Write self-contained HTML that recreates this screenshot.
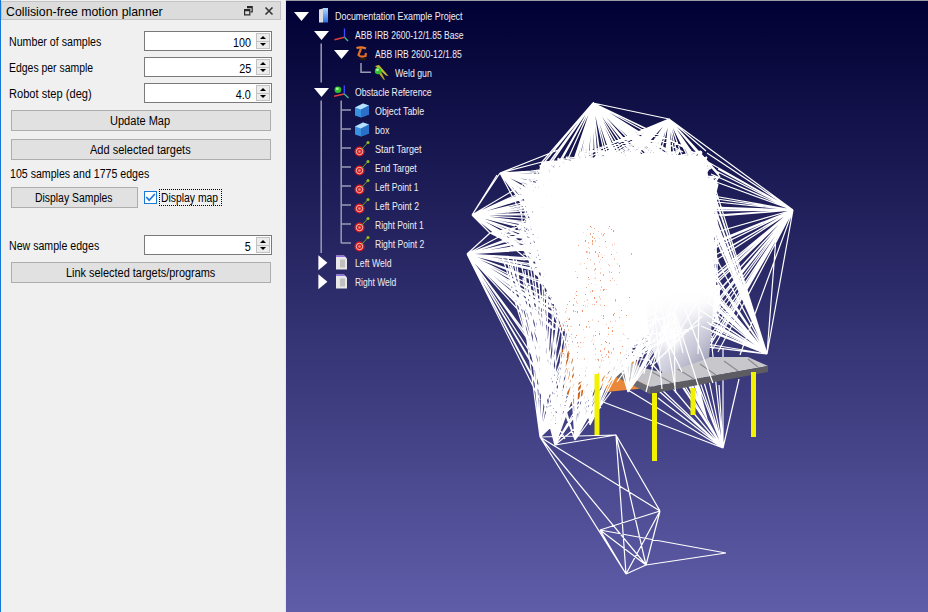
<!DOCTYPE html>
<html><head><meta charset="utf-8">
<style>
*{margin:0;padding:0;box-sizing:border-box}
html,body{width:928px;height:612px;overflow:hidden;background:#f0f0f0;font-family:"Liberation Sans",sans-serif;font-size:12px;color:#000}
#panel{position:absolute;left:0;top:0;width:286px;height:612px;background:#f0f0f0}
#bl{position:absolute;left:0;top:0;width:1px;height:612px;background:#1479d6}
#pr{position:absolute;left:285px;top:0;width:1px;height:612px;background:#e6e6e6}
#title{position:absolute;left:1px;top:1px;width:280px;height:19px;background:#dcdcdc;border:1px solid #c4c4c4}
.t{position:absolute;white-space:nowrap;line-height:12px;font-size:12px;transform-origin:0 0}
.tr{transform-origin:100% 0}
.spin{position:absolute;left:144px;width:128px;height:20px;background:#fff;border:1px solid #7a7a7a}
.sb{position:absolute;left:111px;top:1px;width:14px;height:16px;border:1px solid #c2c2c2;background:#ececec}
.sb i{position:absolute;left:0;top:7px;width:12px;height:1px;background:#c2c2c2}
.sb b{position:absolute;left:3px;width:0;height:0;border-left:3px solid transparent;border-right:3px solid transparent}
.sb b.u{top:2px;border-bottom:3px solid #000}
.sb b.d{top:9px;border-top:3px solid #000}
.btn{position:absolute;left:11px;width:260px;height:21px;background:#e1e1e1;border:1px solid #adadad}
#view{position:absolute;left:286px;top:0;width:642px;height:612px;background:linear-gradient(#000033 0px,#5f5da8 612px)}
#vtop{position:absolute;left:286px;top:0;width:642px;height:1px;background:#9a9aa6}
.tt{position:absolute;white-space:nowrap;font-size:10px;line-height:10px;color:#eeeef4;transform-origin:0 0}
</style></head><body>
<div id="panel">
  <div id="bl"></div><div id="pr"></div>
  <div id="title"></div>
  <div class="t" style="left:6px;top:5px;font-size:13px;line-height:13px;transform:scaleX(0.947)">Collision-free motion planner</div>
  <svg style="position:absolute;left:243px;top:5px" width="12" height="12" viewBox="0 0 12 12"><path d="M4 1.6h5.2v5.2h-1.6M4 2.6h5.2" fill="none" stroke="#2a2a2a" stroke-width="1.2"/><path d="M1.6 4.6h5.2v5.2h-5.2z M1.6 5.6h5.2" fill="none" stroke="#2a2a2a" stroke-width="1.2"/></svg>
  <svg style="position:absolute;left:263px;top:5px" width="12" height="12" viewBox="0 0 12 12"><path d="M2.5 2.5l7 7M9.5 2.5l-7 7" fill="none" stroke="#333" stroke-width="1.6"/></svg>

  <div class="t" style="left:9px;top:36px;transform:scaleX(0.887)">Number of samples</div>
  <div class="spin" style="top:31px"><div class="t tr" style="right:20px;top:5px;transform:scaleX(0.9)">100</div><div class="sb"><i></i><b class="u"></b><b class="d"></b></div></div>
  <div class="t" style="left:9px;top:62px;transform:scaleX(0.87)">Edges per sample</div>
  <div class="spin" style="top:57px"><div class="t tr" style="right:20px;top:5px;transform:scaleX(0.9)">25</div><div class="sb"><i></i><b class="u"></b><b class="d"></b></div></div>
  <div class="t" style="left:9px;top:88px;transform:scaleX(0.925)">Robot step (deg)</div>
  <div class="spin" style="top:83px"><div class="t tr" style="right:20px;top:5px;transform:scaleX(0.9)">4.0</div><div class="sb"><i></i><b class="u"></b><b class="d"></b></div></div>

  <div class="btn" style="top:110px"></div>
  <div class="t" style="left:110px;top:115px;transform:scaleX(0.92)">Update Map</div>
  <div class="btn" style="top:139px"></div>
  <div class="t" style="left:90px;top:144px;transform:scaleX(0.92)">Add selected targets</div>
  <div class="t" style="left:10px;top:168px;transform:scaleX(0.884)">105 samples and 1775 edges</div>
  <div class="btn" style="top:187px;width:127px"></div>
  <div class="t" style="left:35px;top:192px;transform:scaleX(0.867)">Display Samples</div>
  <div style="position:absolute;left:144px;top:191px;width:13px;height:13px;border:1px solid #1b7ad6;background:#fff"></div>
  <svg style="position:absolute;left:144px;top:191px" width="13" height="13" viewBox="0 0 13 13"><path d="M2.2 6L5.2 9.2 10.8 3" fill="none" stroke="#1b7ad6" stroke-width="1.7"/></svg>
  <div style="position:absolute;left:159px;top:189px;width:63px;height:17px;border:1px dotted #000"></div>
  <div class="t" style="left:161px;top:192px;transform:scaleX(0.865)">Display map</div>

  <div class="t" style="left:9px;top:240px;transform:scaleX(0.884)">New sample edges</div>
  <div class="spin" style="top:235px"><div class="t tr" style="right:20px;top:5px;transform:scaleX(0.9)">5</div><div class="sb"><i></i><b class="u"></b><b class="d"></b></div></div>
  <div class="btn" style="top:262px"></div>
  <div class="t" style="left:66px;top:267px;transform:scaleX(0.91)">Link selected targets/programs</div>
</div>
<div id="view"></div>
<svg id="scene" width="928" height="612" viewBox="0 0 928 612" style="position:absolute;left:0;top:0">
<defs>
<linearGradient id="boxg" x1="0" y1="0" x2="0.8" y2="1"><stop offset="0" stop-color="#ffffff"/><stop offset="0.45" stop-color="#f0f0f6"/><stop offset="0.75" stop-color="#c8c8d8"/><stop offset="1" stop-color="#9c9cb4"/></linearGradient>
<radialGradient id="hl" cx="0.5" cy="0.5" r="0.5"><stop offset="0" stop-color="#fff"/><stop offset="0.5" stop-color="#fff" stop-opacity="0.7"/><stop offset="1" stop-color="#fff" stop-opacity="0"/></radialGradient>
<linearGradient id="fadew" x1="0" y1="0" x2="0" y2="1"><stop offset="0" stop-color="#fff"/><stop offset="0.4" stop-color="#fff" stop-opacity="0.9"/><stop offset="1" stop-color="#fff" stop-opacity="0"/></linearGradient>
</defs>
<g fill="#e07828">
<path d="M572 300 L588 290 L602 335 L610 380 L596 392 L582 350 Z"/>
<path d="M598 356 L636 360 L648 388 L606 392 Z" fill="#e88838"/>
<path d="M560 350 L578 345 L590 395 L570 405 Z" fill="#c86018"/>
</g>
<path d="M586 356 L650 387 L660 372 L640 367 L605 350 Z" fill="#c4c4c8"/>
<path d="M586 356 L650 387 L650 394 L586 362 Z" fill="#6a6a72"/>

<g stroke="#fff" stroke-width="1.2" fill="none">
<polygon points="565,162 640,154 700,156 707,162 708,178 714,182 714,300 690,325 630,325 605,338 590,360 578,340 565,300 552,262 545,220 548,185 556,170" fill="#fff" stroke="none"/>
<path d="M609 213L617 284M667 250L631 244M560 266L602 352M582 310L591 191M596 207L660 210M575 164L676 202M678 205L606 160M612 173L564 210M675 215L678 305M566 202L632 254M627 291L592 177M564 203L653 301M702 337L626 291M574 369L593 252M594 327L652 286M685 322L586 324M675 259L687 327M660 201L667 226M644 244L580 226M695 262L676 210M610 212L617 312M709 195L712 270M708 343L607 162M588 267L550 189M664 161L615 220M526 197L653 333M679 206L557 310M632 287L698 338M638 215L666 207M598 291L596 207M621 154L586 349M677 167L586 259M632 184L607 258M545 170L589 382M655 286L591 176M568 269L560 235M596 232L590 374M580 286L581 189M693 328L670 172M636 338L630 261M621 225L591 379M685 194L701 168M546 254L602 183M567 197L655 304M660 213L602 173M572 291L684 211M592 262L665 154M585 204L541 284M594 327L620 245M602 352L719 320M624 258L579 274M535 232L708 180M555 227L531 209M650 317L601 284M591 312L526 187M693 336L717 203M632 221L672 212M570 240L593 329M618 192L621 150M648 225L707 232M715 192L558 159M558 308L694 159M535 232L644 305M717 298L593 389M631 263L591 373M702 220L614 151M666 253L706 311M583 273L650 225M693 196L576 293M687 327L679 245M706 245L698 316M719 323L646 303M697 160L588 305M706 311L600 186M641 237L530 204M558 158L557 272M544 197L541 281M530 215L683 335M672 312L523 195M683 273L710 249M719 323L677 207M583 153L610 231M627 181L567 287M555 175L586 349M716 230L579 278M534 231L650 305M659 156L659 232M592 175L683 269M685 302L521 189M696 301L634 252M664 231L593 252M621 154L580 273M556 282L672 267M641 196L610 311M612 251L545 198M549 267L674 213M657 239L621 225M620 221L538 183M588 167L606 353M548 186L531 246M549 305L633 197M675 231L576 253M707 199L636 162M678 299L565 312M664 206L586 259M564 262L714 312M593 252L557 220M540 166L623 280M547 291L572 319M560 260L613 227M677 292L597 288M543 262L613 238M698 316L582 244M618 155L695 244M700 331L637 203M707 190L560 260M530 214L657 323M547 295L572 291M662 192L646 152M560 260L675 231M696 188L538 247M596 207L664 226M591 176L544 223M588 321L657 171M594 327L597 373M592 257L703 183M592 350L676 288M626 211L564 203M685 312L588 217M603 181L621 339M550 277L529 250M572 310L521 187M687 296L594 163M643 322L720 310M607 284L628 308M685 170L687 312M624 193L579 363M674 213L698 291M560 262L609 283M637 279L659 152M595 231L687 298M595 181L625 172M681 166L598 228M703 165L632 254M539 284L647 156M679 191L605 259M635 253L663 304M621 225L574 246M652 163L615 296M618 313L627 290M591 226L593 376M624 187L601 348M658 206L593 176M598 314L595 181M662 267L617 323M575 164L620 226M677 178L645 264M675 215L582 266M705 270L679 190M641 237L621 256M532 224L606 353M668 300L599 245M685 170L618 313M624 252L658 258M659 152L679 184M690 342L644 217M542 169L567 215M534 239L659 152M598 351L602 227M640 268L641 305M610 342L667 167M585 164L690 297M714 285L572 239M713 291L662 267M691 235L658 240M712 300L573 276M573 311L660 213M541 260L575 190M701 228L654 289M631 270L672 295M614 333L690 263M708 180L704 255M586 160L638 340M705 170L630 233M592 350L546 292M600 246L704 255M594 205L702 220M618 342L685 193M573 301L641 196M556 317L664 214M678 334L601 348M587 390L635 227M584 326L562 225M676 306L634 252M594 236L590 301M549 162L709 290M646 264L677 178M660 261L662 230M583 383L528 180M526 219L611 329M613 226L635 253M523 192L556 282M643 251L672 288M606 160L689 197M656 197L575 164M645 243L583 195M681 240L641 303M561 305L602 233M588 217L573 187M599 263L550 189M598 228L548 282M686 250L698 316M554 277L593 329M714 278L611 322M560 252L623 237M609 283L528 180M626 348L647 153M657 292L702 220M625 294L646 163M561 166L650 290M659 156L628 248M542 255L623 217M710 275L677 207M679 191L627 181M701 156L709 272M719 305L659 288M605 254L623 316M644 197L659 232M669 275L521 236M583 184L716 317M615 166L709 275M676 231L633 337M657 296L635 212M602 183L630 214M658 286L567 287M667 250L707 157M707 281L643 295M591 258L705 170M591 390L596 349M707 281L600 246M667 200L688 325M647 330L689 265M671 338L587 326M534 219L700 319M523 195L716 262M665 162L661 190M636 322L662 281M581 160L567 192M662 193L650 225M650 317L551 211M717 278L578 344M645 248L668 262M582 162L583 384M574 369L644 260M693 336L639 153M606 353L590 201M715 184L556 213M658 203L534 273M608 227L662 171M702 258L578 301M645 266L572 291M623 190L695 332M558 308L710 249M676 210L672 250M630 251L687 320M575 333L664 324M623 207L594 205M622 213L696 244M687 296L570 172M581 160L717 298M598 321L569 333M719 231L588 236M531 177L558 262M694 157L650 164M618 313L679 284M694 185L655 286M623 190L582 343M669 283L553 262M622 166L611 322M605 259L641 303M703 319L675 215M653 335L601 218M544 273L600 150M576 211L579 260M625 267L719 177M599 165L619 340M578 344L705 170M591 219L713 313M704 223L658 342M718 294L578 301M595 311L660 263M630 172L575 352M609 217L672 212M689 265L664 228M599 257L718 264M560 262L542 236M625 267L650 207M679 184L668 210M714 285L591 299M643 244L639 293M526 219L596 297M640 235L591 379M701 156L692 297M627 290L566 247M661 190L625 267M563 211L644 216M595 293L655 191M639 159L556 188M576 324L710 168M658 203L662 301M542 257L716 245M579 278L596 297M633 180L594 205M613 226L564 271M562 203L559 247M604 243L655 304M702 220L533 259M698 182L643 244M643 301L571 159M616 334L600 286M624 179L575 344M690 303L657 274M647 239L668 210M613 156L586 266M677 272L663 327M560 266L581 331M627 295L662 230M702 263L586 259M715 192L717 220M698 225L661 196M614 151L580 216M564 210L626 211M606 344L552 173M582 212L573 276M597 209L555 261M669 304L706 185M668 300L612 154M555 208L656 253M707 339L718 260M614 203L617 284M653 183L549 267M586 160L662 281M615 166L555 261M570 240L577 154M709 291L664 214M576 324L679 190M659 288L531 177M709 275L637 286M621 154L653 186M672 249L693 343M540 193L592 333M585 254L590 201M615 296L583 266M621 154L567 192M688 289L643 301M634 204L590 374M666 328L641 161M690 263L538 231M554 198L558 262M632 184L586 266M717 181L683 300M597 209L582 301M652 286L526 196M660 192L556 290M707 157L697 180M603 166L652 301M628 166L578 262M533 215L715 192M553 262L686 250M655 191L522 191M585 173L647 330M595 181L533 224M680 224L580 382M606 317L540 168M587 289L692 297M715 222L563 331M671 311L625 295M611 329L574 320M662 301L658 332M654 289L640 177M630 261L693 277M561 305L714 176M658 342L614 310M654 316L634 147M714 280L565 312M688 157L710 310M638 219L618 197M695 262L711 296M559 247L553 274M652 286L558 308M587 326L614 203M664 319L662 193M641 222L665 293M686 243L717 183M597 288L610 212M658 265L584 235M592 257L679 190M551 237L673 335M658 258L614 266M594 298L592 237M581 339L646 163M625 163L664 161M594 346L541 259M549 231L697 180M690 344L608 227M637 164L691 159M597 237L627 295M643 322L614 237M628 306L657 171M597 209L533 215M536 170L586 324M554 277L600 286M562 225L583 273M707 190L601 348M575 344L628 279M558 255L687 312M611 322L717 183M585 227L603 181M578 259L591 191M585 173L685 193M718 260L656 253M649 266L664 317M575 290L682 250M628 306L688 289M634 204L530 214M698 316L663 164M548 291L685 199M613 150L682 331M623 316L565 312M694 162L619 234M557 235L581 160M604 150L541 277M596 239L604 358M592 262L622 310M530 215L669 275M660 201L668 300M637 154L575 352M618 192L560 260M569 349L666 253M709 291L582 286M646 152L582 212M594 298L575 190M556 201L582 286M572 319L605 321M614 205L715 184M645 314L707 190M596 285L702 258M680 216L640 177M632 209L685 243M534 231L641 208M658 153L552 173M694 159L697 270M608 227L662 206M604 304L690 342M667 226L560 322M557 308L626 252M520 202L621 329M658 265L560 235M638 215L593 329M685 306L621 225M535 224L607 162M546 226L653 183M610 311L565 314M605 341L610 162M522 191L588 340M591 223L681 306M635 212L641 303M545 247L628 276M653 333L585 173M672 288L616 334M593 389L598 325M582 212L646 163M646 303L678 246M643 295L580 216M539 262L658 203M592 314L700 227M616 341L644 272M580 255L694 187M532 255L596 382M687 244L575 290M586 313L714 312M594 346L541 188M591 195L687 157M526 196L588 305M646 280L561 251M711 310L675 216M614 333L567 221M718 184L682 331M524 235L679 185M596 317L557 266M547 291L638 340M718 260L679 185M562 269L695 244M557 272L540 165M598 368L663 266M540 166L625 294M602 233L710 342M589 322L714 278M586 266L618 197M569 158L586 328M616 341L687 290M717 241L583 316M616 177L557 235M667 250L614 331M694 159L652 232M552 240L689 197M566 333L604 261M611 329L577 154M631 244L631 272M631 244L667 250M657 171L538 247M575 263L699 196M650 317L608 216M528 244L592 251M691 307L580 358M600 193L681 162M718 197L594 384M610 342L715 192M576 324L614 174M702 337L526 196M568 249L631 272M666 238L541 260M519 224L620 221M600 186L565 293M689 245L659 298M567 197L652 301M585 204L622 342M553 274L585 173M555 166L569 333M612 199L707 190M579 372L685 170M690 263L703 234M701 151L623 271M590 201L658 342M685 273L692 198M690 310L573 198M540 228L527 179M575 164L575 190M671 311L648 209M631 270L583 153M672 331L557 310M546 226L646 280M628 308L643 269M639 215L574 183M688 157L709 195M663 327L619 340M582 301L690 342M681 166L710 168M678 334L598 312M594 327L640 321M660 263L583 344M595 181L630 264M574 320L630 172M525 226L583 273M615 205L645 314M590 201L643 244M562 225L691 249M709 219L562 239M602 351L625 267M585 173L594 346M572 238L563 211M673 297L580 329M579 341L660 263M614 174L555 204M638 275L522 191M620 251L570 297M655 206L571 255M666 328L692 293M670 209L561 171M653 186L718 225M609 152L524 249M645 169L584 340M599 183L665 299M709 290L706 199M544 273L579 274M698 167L662 193M564 262L612 251M619 340L592 262M714 280L623 207M682 224L718 247M609 217L600 180M686 230L669 304M714 318L578 373M583 195L570 297M610 300L706 245M625 275L632 190M695 238L690 173M603 212L598 368M565 230L587 326M596 362L569 317M709 254L680 162M638 215L574 365M607 258L541 277M675 231L692 303M590 185L590 301M647 330L696 332M640 321L592 269M567 221L606 359M671 338L558 262M596 285L547 295M661 292L560 212M593 389L526 196M716 262L632 285M641 305L708 297M637 298L664 209M589 198L607 161M685 302L621 154M603 356L647 153M637 295L689 266M625 246L701 156M652 289L535 224M654 262L593 389M644 305L632 190M691 249L636 338M653 209L719 305M593 292L593 219M652 301L535 224M565 241L679 191M561 305L593 189M657 163L662 230M718 184L549 267M579 193L619 234M535 183L662 267M648 209L584 391M694 187L545 286M600 149L541 281M588 281L580 329M572 239L582 301M705 170L678 246M640 321L594 298M540 228L541 188M606 281L711 310M627 295L557 269M540 228L646 174M572 330L683 217M593 176L657 292M615 166L573 301M708 302L680 171M604 304L596 382M624 258L583 195M553 179L716 302M709 290L638 221M586 266L621 154M584 340L678 299M542 169L588 395M625 267L681 166M581 248L690 297M702 220L652 289M592 333L661 341M654 262L702 319M713 291L605 341M696 297L650 207M672 281L681 162M572 319L623 214M637 295L555 166M544 197L536 170M609 337L602 233M566 202L526 196M565 241L626 291M631 272L697 339M666 207L533 215M657 239L641 161M596 239L553 262M543 262L557 304M638 329L714 280M540 228L619 322M610 150L714 318M694 226L687 298M672 288L626 348M705 170L573 301M690 173L669 304M531 209L643 322M685 193L590 293M549 231L662 210M530 214L710 168M661 190L524 185M643 251L603 356M578 276L682 250M594 236L612 288M657 262L582 212M709 254L664 191M710 304L584 348M615 220L628 248M546 292L719 263M698 291L669 243M714 312L668 342M701 156L558 159M596 207L574 365M588 274L647 239M650 164L691 159M668 294L620 215M644 272L544 223M647 153L679 184M677 207L649 266M688 157L580 255M677 178L559 204M641 208L575 352M718 184L609 321M665 162L629 206M631 235L682 250M685 322L687 244M602 351L580 273M597 209L613 238M568 249L667 167M542 257L596 207M578 259L640 333M575 374L595 345M587 343L705 265M554 198L638 329M590 301L604 268M700 286L710 342M534 204L698 316M710 178L648 308M619 248L675 259M580 226L553 237M693 206L556 213M633 212L680 177M575 374L553 185M635 302L643 269M595 345L556 256M547 291L576 211M615 220L661 230M629 206L713 313M588 398L600 193M620 215L710 330M636 322L555 204M644 216L561 251M590 185L628 279M545 247L652 232M707 157L646 174M678 213L573 288M606 281L587 159M553 185L564 220M609 152L592 262M557 310L557 189M674 165L608 227M567 239L613 192M669 271L676 210M658 153L629 278M649 161L656 185M555 164L606 361M591 239L580 205M553 213L602 351M580 286L639 159M656 279L624 161M589 322L613 150M578 301L623 232M555 175L574 365M621 256L536 189M521 236L556 256M714 312L555 227M659 156L642 287M635 227L534 273M523 254L644 272M657 296L692 198M604 173L662 281M589 188L645 243M563 330L659 232M664 206L692 198M611 322L687 327M564 267L638 275M663 266L630 261M673 201L601 218M657 171L573 311M553 185L716 302M558 262L711 222M680 162L581 316M656 197L635 212M603 241L701 228M593 219L543 181M635 186L619 340M592 175L582 301M659 232L557 310M666 330L599 183M624 258L709 291M652 289L698 291M612 190L566 223M646 152L684 303M705 270L664 231M711 222L664 214M668 342L620 312M632 302L672 334M531 209L659 298M602 173L567 239M619 234L641 222M646 163L591 373M682 224L526 196M700 210L587 219M689 265L660 213M637 308L601 218M538 231L675 216M696 244L714 280M696 301L581 339M702 318L690 263M626 252L600 180M566 202L525 245M583 344L611 193M675 152L581 189M606 354L668 262M667 212L572 189M641 203L586 313M541 277L622 160M635 302L595 231M607 161L615 205M703 198L685 243M640 285L582 286M618 197L688 157M589 332L560 235M573 187L647 300M612 345L539 176M672 281L694 226M591 390L623 214M646 282L641 161M531 223L559 204M614 310L544 180M598 318L621 178M710 304L567 327M641 208L564 294M594 163L555 175M540 168L639 153M603 181L544 223M553 206L625 267M614 203L690 310M679 184L618 192M660 253L600 286M613 226L569 349M555 166L632 287M650 201L599 312M520 202L717 298M708 297L597 209M612 251L588 267M570 350L682 224M653 333L540 166M610 212L553 185M658 322L599 312M600 246L693 160M633 337L718 184M599 245L588 274M646 213L598 228M622 342L569 349M672 295L643 251M644 250L697 339M595 181L601 348M655 304L586 259M593 219L714 280M689 197L568 249M717 278L666 328M610 162L597 216M523 195L579 341M655 323L705 275M671 161L690 263M544 276L522 227M608 289L647 330M606 344L621 225M684 321L702 156M622 198L648 209M661 341L597 226M623 214L625 172M600 267L581 356M631 244L554 218M681 240L591 226M556 213L578 344M638 219L663 304M564 262L618 313M544 197L622 310M542 242L608 289M689 197L615 248M582 212L600 186M703 198L597 352M567 327L574 195M637 286L607 222M718 294L680 254M716 245L525 245M661 341L710 310M696 301L680 171M639 266L578 247M627 270L591 379M553 213L628 248M598 321L587 289M665 293L646 264M614 333L669 304M623 232L653 264M688 325L571 304M581 339L700 286M714 176L672 288M598 314L708 302M639 266L664 226M620 277L666 238M525 245L678 300M610 231L591 299M643 322L532 253M692 278L595 345M567 287L555 204M621 243L527 188M522 240L545 198M593 219L690 343M549 305L604 358M672 288L615 166M558 308L549 205M629 283L591 219M551 273L658 195M703 319L680 216M521 189L601 284M716 245L715 208M634 324L560 260M621 154L555 204M532 224L589 339M620 251L567 227M672 295L602 351M694 157L548 291M614 331L557 266M706 168L554 205M679 191L683 273M646 306L605 259M702 266L541 260M613 192L675 152M643 301L613 156M719 320L573 198M711 310L529 264M572 318L668 210M591 223L561 251M599 257L610 342M607 281L656 185M653 205L557 304M572 318L546 226M522 191L674 213M676 258L718 294M682 331L531 223M679 277L597 216M552 173L603 212M579 298L553 262M565 332L615 296M615 153L603 181M667 250L573 328M538 231L538 183M639 341L624 282M602 183L630 172M561 295L568 197M581 356L715 184M652 301L639 159M637 279L704 255M604 261L602 183M602 183L672 267M712 177L574 246M535 183L596 349M521 235L583 344M616 206L676 306M549 237L622 262M678 300L556 204M709 272L570 240M698 291L612 239M524 185L668 210M692 303L665 245M576 234L571 175M544 223L710 342M666 253L621 178M599 257L595 293M690 342L650 164M640 206L690 343M540 254L678 335M640 264L691 235M619 248L574 320M689 300L591 176M624 252L693 293M711 296L627 291M615 296L676 306M609 337L527 179M589 332L631 177M573 311L696 295M527 188L680 150M551 211L659 206M715 192L693 328M598 166L625 275M617 234L623 328M624 258L693 343M553 185L558 255M575 344L589 154M582 286L593 376M635 302L606 353M592 225L664 214M707 199L612 173M597 288L598 368M592 333L541 277M631 207L544 223M541 259L618 192M658 273L714 285M532 193L679 199M618 313L596 232M550 277L605 363M642 337L557 272M603 212L595 345M672 312L540 254M575 344L716 262M592 225L560 260M693 328L522 188M697 270L558 159M649 344L632 285M711 222L650 305M521 236L573 286M596 297L693 206M565 241L718 247M606 168L574 333M671 161L591 176M646 163L693 160M534 239L691 307M636 322L689 300M580 205L641 309M592 251L580 361M658 153L687 244M643 251L702 267M528 225L718 225M640 264L650 207M542 176L634 147M592 262L616 243M656 291L714 280M598 268L710 342M624 187L703 165M550 290L574 320M586 313L652 232M701 151L678 300M630 233L621 154M634 252L556 317M710 304L641 305M640 333L624 282M587 390L636 169M600 186L677 292M590 201L540 168M599 312L540 165M690 310L717 298M540 266L644 216M695 332L714 231M629 283L716 245M578 247L554 202M600 286L719 305M540 209L675 152M703 234L567 195M576 253L590 232M697 270L634 204M685 193L565 241M579 193L655 206M593 176L619 266M588 267L680 216M675 229L548 282M662 193L662 272M687 312L715 208M598 368L607 153M657 171L672 267M691 206L654 327M555 208L718 197M554 312L710 249M563 330L596 222M621 178L693 343M615 248L575 263M689 186L658 278M545 286L691 235M673 302L587 390M614 331L635 269M579 298L578 344M592 262L642 342M547 287L584 340M619 322L662 230M569 333L710 275M588 321L588 167M716 321L551 273M522 227L621 154M574 369L679 184M625 163L591 373M660 192L668 286M565 241L557 189M573 311L703 319M658 195L645 314M664 317L575 333M564 164L573 301M575 271L595 345M594 282L684 211M581 248L644 216M701 156L549 162M598 314L569 202M586 324L691 206M658 322L697 270M583 195L658 342M698 167L596 382M690 303L604 358M577 222L554 247M709 167L566 157M587 159L578 301M656 185L712 225M582 301L669 304M600 286L619 255M689 300L711 222M700 227L678 246M638 221L640 285M676 210L689 245M683 217L665 299M591 195L605 249M637 308L600 180M685 313L670 195M703 183L580 226M592 251L643 281M702 318L607 284M654 176L693 343M666 295L675 162M596 222L699 196M612 239L667 265M589 238L559 215M568 269L534 231M665 154L626 252M605 321L623 299M535 224L654 232M667 265L632 254M670 209L710 178M574 183L602 183M658 332L560 315M639 215L698 291M687 296L672 260M696 218L572 219M689 186L561 166M577 232L702 267M531 171L559 204M691 249L522 188M624 158L569 333M612 251L660 263M614 237L716 262M572 330L623 316M679 284L644 197M631 270L591 256M581 189L691 159M532 255L714 278M555 204L528 225M526 197L623 328M589 196L591 379M583 384L640 264M707 157L567 192M641 203L649 161M656 279L642 220M674 192L600 286M631 177L657 292M637 336L558 158M697 270L609 283M623 217L546 188M664 161L660 192M614 310L650 164M694 157L576 253M596 222L610 300M566 300L714 218M564 262L710 168M556 282L613 192M612 173L551 273M694 185L688 289M559 252L666 328M698 291L596 317M653 264L633 212M540 228L576 165M546 292L623 328M677 292L529 194M628 290L545 272M715 208L596 207M695 262L650 164M613 238L523 195M606 359L689 265M715 184L675 188M606 168L584 340M680 216L531 246M678 334L662 206M584 391L574 320M642 241L683 217M594 165L654 176M709 275L644 197M531 209L593 171M593 389L522 191M697 191L595 363M540 168L626 291M623 328L706 311M672 281L541 259M707 157L654 289M525 226L650 201M658 273L637 286M552 216L530 264M581 248L713 340M613 156L705 275M707 199L684 303M672 212L643 263M559 215L534 239M631 218L677 310M688 238L718 294M555 166L712 225M693 293L641 305M667 200L697 191M685 170L709 219M635 302L605 321M629 206L674 165M566 303L593 284M700 210L600 150M653 183L691 224M664 231L602 173M613 156L586 384M718 264L559 204M657 239L650 201M705 179L581 248M592 314L556 282M639 159L663 204M530 214L574 333M657 163L552 240M617 323L658 258M655 191L572 219M612 199L701 168M643 322L569 333M709 275L590 185M592 177L667 167M670 172L712 270M636 169L610 162M693 206L664 324M714 290L634 324M539 176L564 208M608 216L711 222M581 316L714 231M702 258L693 160M665 299L700 319M658 203L710 305M584 348L709 265M678 334L604 150M530 204L591 212M657 163L717 278M659 288L528 251M710 330L718 226M576 324L553 185M625 242L618 316M524 208L600 193M622 198L528 225M589 196L622 262M660 192L596 297M664 324L637 311M520 231L706 311M687 320L617 312M688 238L612 199M599 165L685 306M585 396L710 249M565 241L662 193M707 157L643 269M690 297L542 169M594 327L588 167M549 162L582 243M664 324L588 340M599 312L544 223M700 210L673 335M574 365L642 337M685 273L684 211M637 164L676 258M557 308L592 327M557 304L710 262M560 315L614 174M678 300L639 149M653 209L594 205M545 247L552 184M586 266L608 216M576 211L719 177M604 304L588 267M527 188L560 262M624 187L685 313M593 189L644 260M690 263L577 381M575 366L627 181M580 216L542 255M702 319L688 238M532 213L582 266M679 190L653 183M662 215L521 235M717 278L600 193M709 265L620 245M641 208L609 217M615 205L647 239M619 340L531 246M602 173L714 340M538 243L579 349M627 281L573 198M593 292L614 310M703 156L652 163M712 300L592 333M667 226L711 310M524 185L665 162M670 172L701 261M524 208L587 373M582 212L586 324M714 278L580 361M541 277L658 342M570 283L617 284M675 282L632 231M573 311L657 262M701 261L661 207M579 274L672 212M617 323L587 373M561 305L580 382M709 290L581 160M640 235L520 202M611 241L644 260M652 324L593 176M564 220L651 160M605 341L717 298M624 158L646 264M688 157L578 230M692 303L662 281M639 341L687 296M573 286L696 297M640 297L720 310M583 383L549 162M638 221L658 265M529 263L596 362M552 173L640 333M558 262L612 190M686 254L645 248M693 293L675 209M631 235L525 253M526 197L551 237M605 321L596 285M570 350L675 188M637 311L635 269M644 197L685 313M582 211L622 262M570 271L577 232M643 295L611 193M603 241L565 314M652 252L622 213M557 235L610 338M711 222L572 330M625 294L557 189M616 243L662 230M714 218L589 216M624 273L640 235M634 280L665 230M590 374L653 183M716 262L662 171M639 293L607 153M572 319L532 255M579 251L698 225M618 197L654 185M654 232L665 154M558 255L568 197M654 316L566 202M540 165L587 373M625 160L622 213M574 329L676 202M646 282L592 177M561 166L557 304M573 286L696 301M580 273L666 164M635 253L702 319M649 161L606 361M592 327L600 186M609 152L699 196M623 328L656 291M646 282L692 293M693 288L678 205M588 400L607 161M639 153L613 227M716 321L701 156M690 263L636 169M594 384L637 308M638 275L578 373M550 290L653 234M652 253L525 226M570 297L560 260M705 317L701 168M531 193L706 331M570 297L607 162M549 217L583 184M646 152L650 290M685 273L709 254M692 278L652 232M655 304L529 264M680 150L569 333M680 264L668 294M680 254L653 264M631 285L585 173M620 348L617 323M575 352L689 197M575 164L659 298M714 285L598 318M606 353L567 227M592 237L572 358M711 310L701 168M595 363L541 260M594 327L535 224M690 344L710 178M719 177L583 384M607 258L664 206M650 164L538 243M582 192L610 162M697 339L658 278M708 297L528 225M676 306L554 312M680 150L614 205M685 243L590 201M619 322L625 172M697 296L588 236M576 165L533 204M646 163L625 246M620 245L658 286M606 359L714 176M572 239L618 155M591 195L712 300M644 216L714 269M596 207L688 289M649 266L573 301M622 262L698 291M592 225L549 305M605 249L584 348M565 217L663 327M673 201L576 211M702 220L594 236M590 374L591 226M570 297L640 206M531 177L716 246M618 155L628 276M667 212L591 373M684 303L581 237M572 358L689 197M701 168L685 193M599 312L646 282M682 224L607 162M596 207L602 233M641 161L625 267M637 298L674 269M667 167L533 215M667 226L702 206M651 302L557 295M587 326L588 281M643 295L540 168M634 147L682 224M582 244L716 262M524 185L630 233M621 154L701 156M716 246L645 248M714 176L543 181M554 266L624 187M618 316L592 262M635 158L667 200M592 327L534 239M559 326L647 156M576 234L653 264M616 341L571 304M581 160L706 168M628 279L592 225M633 337L652 289M673 220L602 173M625 163L604 304M576 165L674 165M557 269L591 195M571 304L667 200M665 245L716 245M719 323L695 238M664 214L707 232M629 283L570 300M630 251L718 260M569 202L580 244M662 267L594 168M538 247L637 286M615 296L569 202M703 251L682 343M628 290L702 266M565 293L639 215M595 345L716 273M630 261L572 291M628 308L555 304M619 322L662 192M563 331L578 276M609 337L547 287M603 246L525 226M696 301L598 325M705 179L595 293M549 305L678 255M632 184L627 270M606 281L576 293M691 224L620 348M531 177L641 203M614 333L627 232M646 306L603 356M572 235L653 209M692 297L717 181M648 308L558 262M608 227L714 176M591 239L712 270M553 274L583 273M669 243L606 353M631 263L667 212M682 331L561 295M586 328L571 267M663 204L559 252M669 271L533 204M640 206L700 286M577 154L518 229M614 310L706 210M625 267L661 230M669 224L607 166M556 201L533 259M677 292L653 183M600 267L541 259M662 215L621 150M540 168L719 177M692 297L555 175M645 286L547 291M578 301L673 297M714 285L670 172M546 198L577 222M645 248L609 152M596 222L595 293M699 210L626 291M660 213L564 164M580 205L595 181M617 312L668 340M668 286L587 343M633 337L710 336M641 303L546 254M709 275L623 214M653 183L619 340M718 260L581 160M540 266L624 273M660 213L658 279M638 221L595 231M633 212L666 164M618 313L669 159M581 160L551 211M702 266L574 195M552 240L689 245M658 332L687 320M707 232L548 178M564 330L678 246M593 189L598 318M531 223L679 199M719 263L528 244M649 266L582 162M656 197L528 180M680 216L669 283M592 225L554 247M559 234L600 150M624 187L651 292M668 210L570 283M612 173L631 270M623 328L521 187M667 301L540 254M544 223L556 317M662 192L521 189M668 286L592 237M589 238L667 212M660 261L591 176M719 305L549 162M583 195L667 226M642 287L588 305M631 183L551 237M573 286L696 188M571 255L714 285M663 327L598 351M653 333L709 272M556 282L643 301M586 349L592 257M544 297L669 243M653 264L621 225M531 209L538 183M685 343L624 282M586 349L662 230M591 172L598 312M701 168L659 156M547 295L710 275M592 251L561 305M650 207L719 263M593 252L657 274M636 266L653 205M602 183L669 243M534 231L565 217M695 332L554 247M631 207L716 314M674 165L592 269M632 302L584 185M582 301L673 201M577 222L547 287M667 226L647 200M529 194L661 292M703 251L564 262M582 162L657 163M656 291L642 335M566 223L640 297M680 150L622 262M640 321L638 275M700 210L589 216M546 226L680 162M680 177L615 205M706 311L523 192M632 209L603 181M585 348L583 266M670 172L592 314M574 369L645 169M589 198L631 270M650 171L688 157M710 178L625 242M658 153L544 224M609 217L640 177M632 302L522 240M613 238L553 213M685 193L650 201M718 226L545 184M638 219L547 295M716 302L654 262M646 163L679 184M574 320L591 172M556 317L673 302M658 279L710 330M665 245L621 154M676 258L560 260M668 286L664 206M573 311L654 185M613 227L540 209M584 391L652 301M625 294L610 342M619 322L575 340M617 323L690 303M599 257L672 249M553 274L603 356M648 209L647 153M530 215L697 264M539 219L580 226M581 356L645 169M633 212L573 311M683 164L626 152M652 252L689 265M679 184L663 326M672 331L554 202M594 205L710 304M693 204L668 300M524 213L598 351M719 309L602 183M560 260L641 340M698 291L649 304M664 317L708 180M698 182L660 201M696 244L591 312M617 284L587 343M681 247L592 257M673 201L586 313M716 314L632 209M702 258L658 322M639 266L685 317M685 312L577 232M608 289L660 213M675 259L545 247M714 176L520 202M590 265L697 270M621 243L566 157M632 183L575 344M619 322L667 222M685 312L675 188M561 166L716 273M638 219L664 191M602 233L582 390M673 297L591 390M565 230L679 185M680 171L552 184M551 265L604 358M544 197L581 379M544 224L567 287M712 300L699 248M641 303L679 185M531 171L607 161M607 161L613 226M549 198L664 226M569 202L581 356M667 167L637 203M695 244L660 253M584 326L685 273M571 267L601 159M574 369L591 312M555 204L590 232M592 333L615 166M552 240L595 345M679 206L524 213M679 191L672 281M697 180L652 232M588 398L550 189M588 217L585 254M546 254L656 197M589 154L584 326M694 226L660 261M712 270L613 150M632 209L552 173M586 313L716 273M572 235L642 342M710 249L675 188M554 277L544 224M604 304L519 224M575 344L556 213M582 211L614 237M545 170L635 227M657 323L526 197M558 262L662 230M593 252L658 258M638 303L624 179M652 232L634 280M634 280L710 305M718 264L588 267M690 173L678 335M614 174L588 281M685 313L576 253M696 301L600 149M562 225L609 267M614 237L610 338M580 216L639 324M631 207L561 171M674 230L618 342M589 188L578 301M608 289L709 265M567 239L638 275M565 293L707 157M656 253L555 164M567 192L714 218M645 169L710 310M596 232L641 303M617 323L652 324M657 274L542 242M702 206L623 328M574 221L657 292M660 256L696 218M532 224L679 277M598 228L636 338M590 232L702 156M598 268L567 221M631 218L559 247M566 202L591 390M604 243L590 293M522 191L583 384M657 157L549 267M569 202L696 332M580 255L598 351M678 335L592 333M687 312L664 209M592 237L580 273M672 250L595 181M625 163L625 283M562 239L557 266M626 165L623 190M589 198L711 310M581 316L654 232M685 306L672 161M621 331L591 239M618 342L545 170M663 204L685 273M561 281L693 206M568 340L682 343M708 199L525 226M666 238L681 162M650 225L557 310M696 332L693 293M549 305L625 160M550 189L521 235M710 310L582 192M579 278L557 310M556 290L696 218M557 308L667 212M588 321L579 349M670 209L652 301M631 180L680 264M715 222L716 321M716 314L654 185M573 288L552 173M677 178L552 173M538 183L649 161M643 263L654 289M559 215L716 302M600 193L577 381M583 316L655 206M704 223L540 224M613 238L529 250M524 249L592 315M635 212L657 262M588 305L592 225M631 272L700 227M600 246L685 343M582 266L585 396M590 265L594 346M551 265L632 190M665 245L716 248M709 254L590 309M526 187L640 285M625 160L669 283M640 268L701 261M585 254L642 241M654 185L676 288M661 230L658 286M701 261L676 210M591 191L561 295M605 363L534 219M567 287L619 340M577 381L631 180M661 292L688 289M694 157L520 202M682 331L685 243M601 284L658 240M685 243L673 335M672 161L693 343M683 269L609 267M599 245L673 220M701 315L591 191M524 208L664 319M678 334L547 287M587 373L638 221M693 288L657 296M663 204L586 324M640 206L552 173M617 254L637 311M593 329L695 332M518 200L656 291M586 160L614 331M615 220L518 229M707 190L567 287M665 245L621 154M610 212L581 356M634 324L623 190M718 225L611 176M666 253L607 284M567 197L687 298M658 286L601 348M649 198L618 192M600 150L567 197M719 309L683 300M594 298L636 169M567 215L604 358M567 197L592 237M615 205L527 188M629 206L700 331M690 303L640 297M672 249L573 187M616 269L635 158M693 206L691 159M711 310L710 336M549 198L673 302M598 291L588 395M701 156L591 172M610 300L696 295M690 310L625 294M665 293L664 209M567 192L620 215M689 197L595 231M552 173L662 267M519 224L605 299M611 176L578 247M642 335L569 171M681 162L657 292M626 348L646 303M710 275L654 173M577 154L623 316M612 239L681 247M591 226L555 204M551 273L586 160M553 185L599 312M701 151L632 165M603 241L714 290M578 301L667 226M597 237L672 249M546 226L545 170M683 300L652 252M529 263L689 197M606 361L648 225M632 165L580 382M606 168L659 341M598 351L567 221M719 320L557 295M654 289L621 154M588 400L634 308M531 209L677 167M547 287L642 287M674 213L626 165M548 291L593 292M670 209L591 239M592 269L682 331M546 246L662 301M638 219L575 290M534 231L566 223M624 273L666 328M693 277L681 247M622 166L557 266M652 163L690 344M600 149L643 295M594 282L569 333M562 203L597 288M641 208L655 304M593 176L534 273M546 188L571 175M628 308L686 230M643 244L673 201M624 193L605 341M554 198L631 235M535 183L544 224M643 295L621 339M653 183L647 153M660 253L577 232M587 373L526 219M690 344L626 152M653 333L690 344M650 171L586 177M585 348L581 189M624 179L602 233M528 244L555 304M604 304L583 266M640 235L672 295M672 267L588 398M644 217L564 220M530 204L590 309M685 313L604 173M598 351L692 303M596 297L717 203M627 232L541 284M619 255L593 176M706 331L612 199M624 273L678 255M653 333L552 240M685 207L640 206M599 312L697 270M631 285L592 226M585 227L701 315M674 213L683 164M662 171L561 295M615 205L650 305M568 328L532 224M570 350L708 343M707 339L649 344M618 316L653 209M693 196L597 373M582 286L719 177M650 290L579 193M584 340L553 262M659 152L669 283M680 216L613 227M594 163L687 237M702 258L619 340M676 202L585 227M680 224L624 273M631 218L710 262M565 332L674 213M625 246L569 317M575 344L624 187M620 312L563 330M588 217L568 340M544 276L528 225M620 277L685 306M580 329L632 302M674 230L719 320M582 286L629 278M610 231L604 173M669 159L662 272M697 264L580 358M587 373L624 282M612 199L719 320M672 281L578 276M593 389L607 284M716 246L667 222M533 259L614 151M587 373L653 234M657 171L557 308M584 348L584 185M596 382L526 187M556 213L661 190M689 197L572 319M552 173L625 294M567 227L654 262M662 171L619 234M709 195L553 206M606 361L714 278M612 199L575 344M567 192L711 222M542 176L694 185M694 185L710 336M603 217L683 164M557 304L568 197M579 372L528 180M709 272L589 339M618 316L676 258M707 157L656 279M624 273L707 238M584 348L620 215M591 226L644 272M523 192L607 222M526 187L659 156M663 326L639 293M648 308L587 256M601 159L572 310M662 210L610 212M698 316L644 218M607 162L715 222M714 318L676 258M525 253L586 349M565 230L630 251M676 288L525 253M607 281L672 331M709 272L590 201M702 152L666 207M645 248L549 205M564 208L607 284M597 237L690 310M588 267L704 223M657 163L666 326M551 211L536 170M604 322L668 262M568 249L629 283M667 301L533 204M639 153L593 389M643 322L616 243M616 177L576 165M560 266L644 250M666 283L607 161M661 196L628 290M709 219L583 383M556 188L586 177M596 382L598 314M648 308L602 183M642 337L624 161M596 223L679 277M667 301L672 212M621 225L657 171M652 252L585 164M657 157L598 351M592 350L679 206M602 183L702 318M664 209L552 173M647 153L579 278M594 346L671 311M590 201L532 224M717 241L526 196M661 341L637 154M671 331L652 301M604 243L518 200M584 326L694 162M567 327L663 164M693 277L668 294M672 250L644 260M567 192L583 273M677 178L693 204M645 314L703 165M542 169L591 219M549 236L578 276M622 160L549 267M549 162L579 251M609 152L675 229M549 231L535 183M656 291L641 237M529 264L583 271M675 231L575 290M685 243L707 339M541 260L562 225M543 270L640 333M703 169L582 286M568 197L662 210M547 295L621 243M549 231L708 180M702 152L650 317M575 340L554 198M637 295L593 329M543 270L562 239M685 313L620 226M553 274L604 304M540 254L674 165M716 248L632 183M644 217L582 151M688 238L560 262M642 220L599 312M573 288L532 255M567 239L578 262M671 331L674 192M697 270L651 302M660 263L635 302M690 173L597 226M552 173L527 179M566 202L597 288M620 296L659 341M567 195L597 216M592 175L658 279M631 180L572 238M572 358L528 251M716 302L622 294M594 346L587 390M692 198L575 344M584 218L600 193M680 224L587 256M715 184L580 272M710 336L679 184M643 263L666 164M525 245L610 300M570 172L616 341M626 211L573 276M615 205L654 316M620 296L677 272M643 322L569 280M580 216L675 215M609 321L609 283M659 341L588 321M642 220L645 286M564 208L601 324M554 247L668 300M664 209L561 251M694 226L672 312M581 160L656 197M661 230L589 339M570 297L714 180M675 188L583 184M681 166L715 301M555 164L624 179M709 275L698 316M649 266L602 227M715 184L704 255M580 216L582 151M710 275L711 310M714 231L607 258M579 363L531 223M545 170L719 177M662 272L664 317M552 173L606 354M697 339L540 266M677 310L589 332M519 224L591 373M572 319L701 315M650 164L714 231M649 304L584 391M687 298L604 243M599 312L559 252M529 194L553 237M707 190L530 204M714 280L573 288M575 344L587 159M618 192L591 219M696 218L534 231M574 246L702 258M557 269L685 306M547 295L588 281M667 265L714 278M582 301L686 254M554 202L647 330M617 254L684 321M639 159L534 239M583 271L644 272M588 398L689 245M705 179L601 324M567 215L704 255M526 197L680 162M649 161L618 197M581 316L604 173M571 293L565 170M643 301L583 384M633 197L558 307M568 340L641 196M632 183L567 287M658 258L526 219M674 213L678 246M693 206L679 245M658 322L558 158M668 300L588 274M596 232L581 356M718 225L705 170M619 248L646 163M561 295L659 298M708 199L547 287M682 331L530 264M519 224L633 212M672 334L696 297M557 283L678 335M578 247L657 323M538 183L589 154M544 273L641 208M538 247L714 180M578 301L542 255M632 221L646 272M592 225L624 258M555 204L687 298M695 238L581 248M528 251L717 298M616 206L690 173M575 340L693 328M593 329L620 277M611 329L703 165M623 328L714 278M520 202L605 313M659 288L718 294M569 317L649 304M698 225L639 153M662 171L615 289M630 251L576 165M560 260L664 206M637 286L663 327M525 253L552 173M647 156L586 177M629 311L630 214M657 157L614 266M662 192L708 199M720 310L630 172M685 170L672 249M673 297L592 262M625 275L561 251M612 199L580 361M678 334L544 197M624 158L709 291M691 224L566 300M680 254L622 262M672 334L696 297M534 231L591 176M559 241L584 391M690 297L679 185M665 299L569 280M612 199L639 341M687 244L534 204M580 244L545 170M661 181L714 180M706 185L593 189M644 272L607 258M518 229L634 147M592 314L649 344M639 266L586 349M549 231L586 266M708 180L615 252M582 310L535 183M544 297L573 311M604 322L641 161M568 269L544 276M591 195L652 289M561 295L592 315M569 280L718 294M698 167L568 340M699 196L708 302M678 246L642 287M592 331L620 312M654 262L570 297M525 253L639 341M610 212L717 183M660 263L592 314M707 281L704 223M549 236L640 297M662 171L566 202M616 341L648 209M675 188L689 300M708 302L553 185M547 295L638 329M583 184L685 343M535 183L610 342M634 280L524 185M594 168L706 331M691 249L591 172M685 170L714 280M693 196L553 249M597 288L600 160M633 337L619 291M700 286L606 317M559 241L582 212M710 330L580 226M584 185L559 311M716 248L662 267M703 169L595 293M593 329L567 227M650 305L550 296M551 273L592 314M584 326L614 331M640 297L632 184M667 226L550 296M604 362L705 270M659 206L707 157M589 339L712 300M705 265L664 324M622 198L638 221M710 310L640 264M525 226L661 207M661 196L613 150M639 324L602 351M574 365L703 169M525 253L520 197M669 271L591 219M694 162L541 277M576 165L656 253M688 238L697 191M639 341L529 264M653 264L620 221M636 169L522 191M682 224L582 301M661 207L567 192M570 350L681 162M719 305L691 206M683 300L691 224M705 275L657 262M591 223L620 251M703 156L557 235M706 245L637 336M719 305L716 245M572 238L575 290M583 195L697 191M619 248L560 262M605 249L657 292M594 168L524 208M679 284L659 156M602 183L553 185M612 251L522 188M559 247L624 193M716 245L695 332M698 291L658 332M621 329L698 338M624 278L662 301M665 293L636 322M523 195L642 220M582 151L583 316M582 212L591 312M582 266L699 196M687 157L572 310M602 233L541 260M665 293L601 348M630 261L701 261M664 228L533 204M687 312L532 224M686 230L630 264M606 344L635 212M565 293L717 203M565 293L579 372M662 230L622 213M654 327L553 185M616 341L643 263M672 249L653 335M666 328L640 297M592 350L668 262M612 251L710 168M709 195L640 206M691 206L652 253M652 301L641 340M534 273L556 290M546 246L640 264M680 254L580 286M687 296L678 205M547 291L719 305M695 262L672 250M705 317L588 274M696 301L658 203M621 150L586 177M540 166L618 155M619 255L610 231M573 301L646 152M659 156L588 398M676 258L623 271M642 342L621 243M580 255L688 325M580 216L593 292M604 261L637 336M706 311L649 266M571 159L606 317M586 266L544 224M528 225L717 220M708 302L686 254M672 331L641 208M598 351L630 251M624 193L522 227M616 290L572 330M702 206L607 222M701 151L540 266M716 246L647 156M591 258L686 243M669 224L694 157M598 291L600 150M561 295L658 332M520 231L575 263M587 256L572 219M617 323L637 286M531 177L702 220M628 166L629 278M615 153L557 269M611 322L621 243M600 246L574 183M710 330L643 281M654 289L661 181M664 191L545 249M572 358L540 168M620 221L598 312M647 239L632 183M681 166L646 272M654 176L580 286M593 176L716 314M584 348L642 337M539 284L634 204M619 322L597 209M564 203L612 173M570 350L625 275M566 247L598 268M630 233L653 333M579 274L720 310M599 245L718 226M718 260L635 253M662 301L633 197M689 245L690 297M538 231L707 281M692 198L675 162M588 321L644 217M529 263L572 238M549 231L575 340M620 296L640 235M530 214L563 330M538 231L549 162M562 269L570 297M592 225L657 163M687 298L712 177M684 211L662 171M580 205L572 319M540 254L601 250M527 179L564 262M588 167L718 260M664 228L703 319M529 264L702 263M582 151L626 152M664 161L656 291M553 185L624 187M640 333L615 153M615 289L579 298M605 313L605 254M702 263L602 183M647 156L642 287M609 321L600 150M680 216L691 249M598 291L703 251M672 249L675 216M620 215L578 262M639 341L648 209M716 262L685 193M659 156L718 197M646 306L599 312M553 185L546 254M699 210L626 291M716 230L714 180M532 255L582 151M589 188L623 207M609 213L540 166M545 286L709 291M678 246L705 270M609 321L670 209M683 217L592 269M711 222L540 166M556 188L658 206M614 203L638 221M560 260L693 328M570 283L533 215M714 285L606 362M606 344L637 308M636 162L638 340M637 286L548 186M583 195L568 269M617 323L671 311M709 219L612 345M692 303L635 158M705 179L622 166M635 186L718 226M582 390L645 264M658 240L676 210M588 321L667 226M582 244L685 273M610 300L605 263M600 193L588 267M557 304L718 225M541 260L623 316M678 335L588 321M623 214L631 244M555 261L617 312M634 280L633 197M598 321L553 262M635 186L583 271M588 395L629 206M636 322L677 207M586 313L672 295M676 306L718 184M685 302L718 226M633 337L524 235M579 363L679 245M702 152L570 172M577 320L667 301M694 159L560 252M703 198L577 232M699 248L536 170M698 291L590 201M603 181L624 282M629 206L546 226M664 226L640 177M603 217L687 298M651 302L550 290M594 168L658 332M639 341L667 250M620 251L612 345M623 280L564 203M605 249L638 303M574 320L605 259M691 249L664 317M550 290L621 331M635 227L588 167M650 164L638 275M678 246L558 262M563 223L605 259M594 236L640 268M660 210L636 266M544 224L590 293M702 152L621 178M592 177L706 185M612 288L716 246M533 224L712 270M592 350L625 295M615 153L688 238M573 288L657 262M583 344L718 226M644 197L610 300M597 352L605 263M626 348L607 284M583 344L695 244M706 245L674 192M660 201L668 340M620 251L570 172M719 305L693 277M568 249L589 198M695 202L689 266M696 218L609 217M571 175L606 361M614 310L653 264M599 183L554 247M575 290L574 246M586 254L555 175M594 384L678 255M678 300L714 280M553 206L572 358M664 228L617 284M594 298L719 320M691 249L644 216M556 317L676 306M552 216L594 282M657 239L719 309M718 226L614 174M606 317L550 306M708 297L599 263M710 275L559 252M672 281L574 329M571 159L718 260M653 264L580 382M575 333L557 269M630 233L636 322M562 269L658 273M581 316L688 238M550 277L678 305M675 152L690 263M711 296L582 211M693 204L604 261M637 295L703 251M701 261L693 343M539 262L574 320M599 183L660 305M626 165L683 273M601 324L710 310M605 313L589 216M569 202L661 230M595 345L614 310M564 294L655 304M583 195L581 331M688 289L561 295M532 224L623 232M699 196L532 224M541 188L672 161M580 273L660 253M594 205L608 289M612 190L672 288M589 382L564 164M709 167L603 166M672 295L621 243M687 320L688 157M614 333L565 293M541 281L594 327M680 224L658 206M714 290L640 288M692 278L685 317M636 266L571 267M641 237L676 306M625 163L717 203M683 164L643 281M562 225L646 174M538 247L573 276M547 287L623 328M648 308L596 297M692 278L627 232M651 160L705 170M575 361L662 215M583 273L585 348M545 272L707 281M670 172L655 304M690 303L639 266M620 226L532 253M661 292L557 235M590 232L666 328M661 341L649 304M542 257L568 269M544 224L693 196M662 215L567 215M589 188L566 247M681 162L613 150M521 187L563 330M635 269L594 163M553 185L569 158M534 273L577 222M718 225L592 226M678 213L553 185M647 239L662 193M635 186L583 153M687 296L558 159M647 319L636 356M592 318L647 319M631 349L600 332M595 355L615 318M577 345L607 306M634 311L606 354M577 315L597 329M591 326L655 331M601 357L638 318M586 304L602 330M582 322L641 355M587 348L623 360M568 342L641 355M568 334L639 360M591 321L624 355M587 367L645 321M618 357L598 308M586 352L634 361M599 305L586 385M604 375L586 352M593 329L634 358M622 325L598 343M641 333L583 384M645 314L607 377M592 318L652 349M602 330L607 306M609 360L641 329M577 345L622 325M628 316L653 336M631 349L638 318M586 378L602 330M651 329L629 350M601 355L599 333M603 311L628 316M636 316L590 385M625 367L601 367M606 347L607 377M586 385L572 316M646 338L576 308M617 310L591 349M601 355L594 329M583 384L587 337M587 337L636 316M575 321L653 336M582 307L598 342M599 333L638 315M639 321L652 349M583 386L643 347M605 307L595 364M582 309L574 356M589 350L590 319M591 354L618 357M579 314L643 357M581 348L582 322M642 339L623 369M629 359L608 310M604 375L638 315M568 328L642 339M631 349L591 321M582 307L595 364M626 311L572 316M593 349L624 369M604 372L617 310M629 359L607 377M613 332L601 355M586 377L586 352M575 321L591 354M568 334L643 357M629 359L634 311M653 336L610 357M618 316L643 357M613 360L585 336M656 320L591 349M579 314L583 384M598 342L644 336M652 349L634 311M606 347L634 361M637 325L595 314M613 312L651 329M634 312L641 333M605 375L634 344M598 308L625 352M650 360L588 353M595 364L645 321M577 345L595 314M604 372L647 319M607 377L652 349M609 360L631 322M579 314L643 357M633 355L591 349M607 329L568 328M609 357L577 315M593 103L576 161M593 103L548 167M593 103L678 171M593 103L555 169M593 103L602 170M593 103L666 169M593 103L638 188M593 103L666 151M593 103L595 151M593 103L688 164M593 103L667 155M593 103L609 149M593 103L665 167M593 103L586 166M593 103L604 194M593 103L643 161M593 103L589 199M593 103L612 155M593 103L703 184M593 103L662 187M593 103L572 183M593 103L568 182M593 103L687 176M593 103L618 174M593 103L572 196M593 103L650 173M593 103L677 168M593 103L704 183M593 103L585 187M593 103L698 169M593 103L608 156M593 103L583 196M593 103L664 165M593 103L633 181M593 103L554 190M593 103L592 164M593 103L634 196M593 103L691 171M593 103L691 150M593 103L580 169M593 103L613 190M593 103L634 154M593 103L561 198M593 103L672 183M593 103L585 188M593 103L603 179M593 103L613 154M593 103L613 150M593 103L613 173M593 103L584 164M593 103L581 172M593 103L619 172M593 103L574 175M593 103L622 151M593 103L598 187M593 103L590 155M593 103L593 149M593 103L598 175M593 103L619 167M593 103L583 186M593 103L618 151M593 103L617 160M593 103L620 162M593 103L683 152M593 103L659 165M593 103L697 154M593 103L653 156M593 103L677 166M593 103L620 165M593 103L654 154M593 103L553 160M593 103L631 157M593 103L636 163M593 103L548 167M593 103L547 165M593 103L543 175M593 103L554 174M593 103L541 174M593 103L542 165M669 119L711 169M669 119L669 174M669 119L577 167M669 119L638 169M669 119L637 173M669 119L612 171M669 119L611 176M669 119L600 188M669 119L672 184M669 119L614 157M669 119L641 165M669 119L644 155M669 119L687 155M669 119L688 173M669 119L589 171M669 119L573 159M669 119L606 174M669 119L623 167M669 119L585 169M669 119L647 174M669 119L633 170M669 119L635 173M669 119L720 177M669 119L665 189M669 119L636 181M669 119L668 183M669 119L657 154M669 119L653 186M669 119L609 178M669 119L620 164M669 119L634 169M669 119L583 160M669 119L629 163M669 119L640 175M669 119L670 190M669 119L681 171M669 119L662 191M669 119L573 161M669 119L679 191M669 119L601 175M669 119L642 175M669 119L593 175M669 119L597 162M669 119L632 192M669 119L581 171M669 119L654 155M669 119L609 167M669 119L572 171M669 119L646 178M669 119L639 190M593 103L669 119M669 119L706 151M669 119L793 210M669 119L710 179M669 119L702 167M669 119L704 158M669 119L706 186M669 119L703 177M669 119L703 175M669 119L704 170M669 119L708 180M669 119L719 174M542 162L599 172M542 162L542 205M542 162L571 201M542 162L538 209M542 162L585 191M542 162L567 202M542 162L561 204M542 162L548 202M542 162L548 168M542 162L559 179M542 162L598 168M542 162L550 169M542 162L576 163M542 162L570 176M542 162L601 199M542 162L594 201M542 162L570 203M542 162L534 210M542 162L539 194M542 162L560 174M542 162L599 204M542 162L582 184M542 162L535 197M542 162L541 167M542 162L566 204M542 162L591 172M542 162L552 169M542 162L604 181M542 162L546 165M542 162L618 156M500 173L558 150M542 162L593 103M500 173L542 162M500 173L516 178M500 173L539 222M500 173L547 212M500 173L541 201M500 173L588 233M500 173L558 175M500 173L559 180M500 173L546 180M500 173L586 189M500 173L596 204M500 173L581 240M500 173L562 201M500 173L541 229M500 173L597 211M500 173L522 192M500 173L521 187M500 173L547 189M500 173L582 171M500 173L573 194M500 173L599 218M500 173L561 233M500 173L559 229M500 173L565 169M500 173L522 182M500 173L553 185M500 173L541 174M500 173L568 180M500 173L530 176M500 173L554 211M500 173L523 198M500 173L591 190M500 173L561 217M500 173L521 213M500 173L563 212M500 173L564 194M500 173L576 240M500 173L549 179M500 173L553 211M500 173L576 202M500 173L570 176M500 173L546 200M500 173L545 204M500 173L575 178M500 173L538 204M500 173L525 178M472 215L559 186M472 215L549 185M472 215L566 179M472 215L575 215M472 215L561 194M472 215L556 273M472 215L537 219M472 215L584 188M472 215L543 227M472 215L551 225M472 215L513 239M472 215L515 226M472 215L549 180M472 215L589 172M472 215L537 267M472 215L573 180M472 215L523 233M472 215L528 235M472 215L572 206M472 215L577 194M472 215L509 211M472 215L570 260M472 215L532 204M472 215L520 195M472 215L562 249M472 215L544 192M472 215L523 227M472 215L544 255M472 215L580 199M472 215L548 232M472 215L570 203M472 215L522 199M472 215L550 265M472 215L528 215M472 215L524 184M472 215L511 209M472 215L578 233M472 215L578 174M472 215L562 180M472 215L569 207M472 215L533 226M472 215L546 213M472 215L521 236M472 215L548 227M472 215L520 250M472 215L500 173M472 215L497 175M467 254L551 328M467 254L525 260M467 254L563 239M467 254L551 224M467 254L549 227M467 254L536 316M467 254L528 232M467 254L522 309M467 254L556 324M467 254L563 263M467 254L563 289M467 254L580 331M467 254L535 238M467 254L562 277M467 254L561 260M467 254L570 312M467 254L565 317M467 254L572 246M467 254L570 244M467 254L519 226M467 254L582 281M467 254L574 315M467 254L557 331M467 254L571 247M467 254L584 275M467 254L542 226M467 254L565 222M467 254L540 272M467 254L516 281M467 254L542 308M467 254L587 241M467 254L542 320M467 254L531 268M467 254L542 244M467 254L531 258M467 254L572 295M467 254L584 320M467 254L520 243M467 254L561 231M467 254L545 242M467 254L543 337M467 254L520 290M467 254L526 309M467 254L584 244M467 254L588 338M467 254L518 290M467 254L552 314M467 254L548 261M467 254L571 270M467 254L526 287M467 254L516 293M467 254L543 328M467 254L551 307M467 254L554 330M467 254L515 280M467 254L525 333M467 254L539 289M467 254L559 408M467 254L533 343M467 254L532 304M467 254L490 233M472 215L490 233M467 254L546 401M467 254L540 400M467 254L548 380M490 233L527 251M490 233L545 242M490 233L522 230M490 233L516 230M490 233L525 249M490 233L536 248M490 233L513 228M490 233L533 224M490 233L542 258M490 233L544 248M490 233L542 236M490 233L542 254M793 210L711 174M793 210L702 354M793 210L712 210M793 210L700 321M793 210L713 340M793 210L707 153M793 210L708 162M793 210L719 299M793 210L706 305M793 210L701 249M793 210L719 335M793 210L709 244M793 210L717 202M793 210L713 284M793 210L720 253M793 210L701 332M793 210L720 216M793 210L717 242M793 210L706 252M793 210L708 179M793 210L706 210M793 210L711 245M793 210L709 310M793 210L718 352M793 210L718 169M793 210L701 270M793 210L718 324M793 210L713 233M793 210L710 198M793 210L709 328M793 210L705 211M793 210L716 215M793 210L700 264M793 210L714 278M793 210L708 339M793 210L713 207M793 210L712 245M793 210L718 333M793 210L711 299M793 210L703 357M793 210L720 240M793 210L709 314M793 210L701 208M793 210L701 216M793 210L714 170M793 210L701 291M793 210L708 195M793 210L714 275M793 210L718 282M793 210L716 208M793 210L767 354M793 210L712 350M793 210L740 355M767 354L706 182M767 354L711 291M767 354L702 189M767 354L706 287M767 354L712 210M767 354L702 206M767 354L717 325M767 354L715 329M767 354L704 283M767 354L718 305M767 354L717 327M767 354L710 300M767 354L706 300M767 354L716 334M767 354L703 303M767 354L708 214M767 354L716 276M767 354L701 343M767 354L708 213M767 354L707 298M767 354L700 190M767 354L701 191M767 354L715 196M767 354L718 232M767 354L718 229M767 354L708 222M767 354L713 192M767 354L708 191M767 354L718 295M767 354L704 286M767 354L713 304M767 354L708 320M767 354L713 292M767 354L717 299M767 354L706 196M767 354L703 318M767 354L707 204M767 354L703 186M767 354L703 312M767 354L704 259M767 354L712 178M767 354L713 276M767 354L709 216M767 354L707 241M767 354L701 327M767 354L776 238M767 354L690 345M767 354L650 340M546 401L572 340M546 401L556 291M546 401L563 283M546 401L550 324M546 401L564 336M546 401L542 298M546 401L537 315M546 401L548 286M546 401L567 358M546 401L536 303M546 401L564 311M546 401L532 292M546 401L563 340M546 401L508 279M546 401L568 342M546 401L528 270M546 401L523 278M546 401L544 280M546 401L509 271M546 401L535 280M546 401L523 279M546 401L558 314M538 265L546 401M508 264L555 445M536 299L555 445M533 266L550 385M527 297L555 445M525 270L540 437M527 283L575 440M510 266L550 385M529 286L560 420M529 259L550 385M517 287L546 401M513 258L546 401M519 285L575 440M507 256L575 440M520 288L560 420M502 257L560 420M516 258L540 437M510 272L555 445M512 264L555 445M542 280L546 401M538 281L560 420M521 264L550 385M467 254L573 403M467 254L538 374M467 254L565 439M467 254L536 371M540 437L586 383M540 437L571 354M540 437L555 354M540 437L544 326M540 437L588 344M540 437L557 373M540 437L588 356M540 437L546 341M540 437L596 310M540 437L601 333M540 437L581 364M540 437L585 373M540 437L531 300M540 437L531 294M540 437L571 340M540 437L560 314M540 437L587 344M540 437L550 322M540 437L593 386M540 437L537 296M540 437L588 374M540 437L580 384M540 437L547 294M540 437L591 389M540 437L590 312M555 445L581 310M555 445L570 308M555 445L573 393M555 445L556 324M555 445L609 352M555 445L586 302M555 445L578 343M555 445L595 383M555 445L585 398M555 445L568 330M555 445L591 316M555 445L590 327M555 445L574 381M555 445L587 398M555 445L584 365M555 445L574 296M555 445L574 340M555 445L544 311M555 445L563 352M555 445L585 308M555 445L548 339M555 445L601 407M555 445L583 319M555 445L607 366M555 445L599 313M555 445L584 355M555 445L569 295M555 445L552 305M555 445L570 352M555 445L563 321M575 440L592 344M575 440L605 347M575 440L610 345M575 440L612 370M575 440L582 304M575 440L578 307M575 440L618 341M575 440L597 358M575 440L568 317M575 440L575 327M575 440L603 303M575 440L618 350M575 440L621 335M575 440L605 370M575 440L613 353M575 440L578 330M575 440L607 305M575 440L608 334M575 440L611 392M575 440L567 317M575 440L616 367M575 440L608 352M575 440L574 323M575 440L591 307M575 440L606 341M590 425L575 313M590 425L617 301M590 425L619 363M590 425L619 310M590 425L618 340M590 425L597 319M590 425L588 312M590 425L616 357M590 425L592 341M590 425L616 347M590 425L612 368M590 425L623 343M590 425L617 318M590 425L595 357M590 425L621 366M628 392L659 339M628 392L647 311M628 392L686 312M628 392L634 304M628 392L656 301M628 392L621 303M628 392L672 306M628 392L627 319M628 392L644 316M628 392L635 309M628 392L678 300M628 392L601 301M628 392L614 305M628 392L618 311M628 392L633 309M628 392L672 322M628 392L658 319M628 392L614 306M612 380L639 301M612 380L634 309M612 380L635 303M612 380L646 324M612 380L667 310M612 380L664 331M612 380L669 321M612 380L619 307M612 380L676 304M612 380L655 334M612 380L669 320M612 380L653 309M723 448L671 354M723 448L659 387M723 448L711 338M723 448L723 348M723 448L651 384M723 448L660 345M723 448L648 359M723 448L693 344M723 448L657 346M723 448L661 355M723 448L685 351M723 448L698 384M723 448L700 337M723 448L693 362M707 419L680 345M707 419L675 350M707 419L678 351M707 419L685 353M707 419L681 344M707 419L687 353M707 419L687 373M707 419L686 378M707 419L692 362M707 419L673 346M598 400L723 448M628 390L723 448M658 398L723 448M723 448L739 379M723 448L719 385M540 437L616 435M540 437L660 511M540 437L626 574M540 437L646 565M616 435L660 511M616 435L626 574M616 435L646 565M660 511L600 530M660 511L626 574M660 511L646 565M600 530L626 574M600 530L646 565M600 530L726 553M646 565L726 553M626 574L646 565M555 445L616 435"/>
<g fill="#e87040" stroke="none" opacity="0.75"><rect x="598" y="359" width="1" height="2" opacity="1.00"/><rect x="612" y="327" width="1" height="1" opacity="0.50"/><rect x="600" y="280" width="1" height="1" opacity="1.00"/><rect x="569" y="353" width="1" height="1" opacity="1.00"/><rect x="626" y="315" width="1" height="1" opacity="1.00"/><rect x="601" y="286" width="1" height="2" opacity="0.50"/><rect x="607" y="336" width="1" height="1" opacity="0.50"/><rect x="586" y="326" width="1" height="2" opacity="0.80"/><rect x="600" y="304" width="1" height="2" opacity="0.35"/><rect x="586" y="235" width="1" height="1" opacity="0.35"/><rect x="589" y="248" width="1" height="1" opacity="0.50"/><rect x="599" y="261" width="1" height="2" opacity="0.35"/><rect x="601" y="233" width="1" height="2" opacity="0.35"/><rect x="608" y="264" width="1" height="1" opacity="0.50"/><rect x="619" y="317" width="1" height="1" opacity="0.80"/><rect x="589" y="253" width="1" height="1" opacity="0.50"/><rect x="622" y="324" width="1" height="2" opacity="0.35"/><rect x="598" y="231" width="1" height="1" opacity="0.50"/><rect x="588" y="303" width="1" height="1" opacity="0.35"/><rect x="575" y="293" width="1" height="1" opacity="0.35"/><rect x="609" y="265" width="1" height="1" opacity="0.80"/><rect x="563" y="353" width="1" height="1" opacity="1.00"/><rect x="594" y="228" width="1" height="1" opacity="0.80"/><rect x="595" y="268" width="1" height="2" opacity="0.80"/><rect x="606" y="342" width="1" height="1" opacity="1.00"/><rect x="600" y="272" width="1" height="2" opacity="0.50"/><rect x="609" y="226" width="1" height="1" opacity="1.00"/><rect x="608" y="334" width="1" height="1" opacity="1.00"/><rect x="594" y="328" width="1" height="1" opacity="0.35"/><rect x="576" y="335" width="1" height="1" opacity="1.00"/><rect x="583" y="329" width="1" height="1" opacity="0.35"/><rect x="588" y="321" width="1" height="1" opacity="1.00"/><rect x="605" y="241" width="1" height="1" opacity="1.00"/><rect x="612" y="333" width="1" height="2" opacity="0.50"/><rect x="577" y="342" width="1" height="1" opacity="0.80"/><rect x="600" y="350" width="1" height="2" opacity="0.80"/><rect x="609" y="343" width="1" height="1" opacity="1.00"/><rect x="621" y="310" width="1" height="1" opacity="1.00"/><rect x="577" y="303" width="1" height="1" opacity="0.50"/><rect x="601" y="344" width="1" height="1" opacity="0.80"/><rect x="569" y="301" width="1" height="1" opacity="1.00"/><rect x="585" y="294" width="1" height="1" opacity="1.00"/><rect x="599" y="331" width="1" height="1" opacity="0.35"/><rect x="591" y="227" width="1" height="1" opacity="0.50"/><rect x="605" y="341" width="1" height="1" opacity="1.00"/><rect x="571" y="334" width="1" height="1" opacity="0.80"/><rect x="606" y="324" width="1" height="1" opacity="0.50"/><rect x="596" y="301" width="1" height="2" opacity="0.80"/><rect x="616" y="252" width="1" height="1" opacity="0.35"/><rect x="613" y="230" width="1" height="2" opacity="1.00"/><rect x="567" y="317" width="1" height="1" opacity="0.35"/><rect x="595" y="277" width="1" height="2" opacity="0.35"/><rect x="580" y="347" width="1" height="1" opacity="0.35"/><rect x="587" y="306" width="1" height="1" opacity="0.35"/><rect x="594" y="341" width="1" height="1" opacity="0.35"/><rect x="629" y="297" width="1" height="1" opacity="1.00"/><rect x="590" y="259" width="1" height="2" opacity="0.35"/><rect x="573" y="310" width="1" height="2" opacity="0.80"/><rect x="609" y="271" width="1" height="2" opacity="0.50"/><rect x="597" y="253" width="1" height="1" opacity="0.35"/><rect x="608" y="356" width="1" height="2" opacity="0.80"/><rect x="594" y="238" width="1" height="1" opacity="1.00"/><rect x="592" y="236" width="1" height="2" opacity="0.80"/><rect x="592" y="240" width="1" height="2" opacity="1.00"/><rect x="600" y="298" width="1" height="2" opacity="0.35"/><rect x="585" y="240" width="1" height="2" opacity="1.00"/><rect x="577" y="358" width="1" height="1" opacity="0.50"/><rect x="616" y="284" width="1" height="1" opacity="0.35"/><rect x="589" y="326" width="1" height="2" opacity="0.50"/><rect x="602" y="236" width="1" height="1" opacity="0.35"/><rect x="611" y="352" width="1" height="2" opacity="0.80"/><rect x="620" y="340" width="1" height="1" opacity="0.35"/><rect x="584" y="337" width="1" height="1" opacity="0.50"/><rect x="583" y="232" width="1" height="1" opacity="0.35"/><rect x="600" y="259" width="1" height="1" opacity="0.35"/><rect x="600" y="289" width="1" height="2" opacity="0.35"/><rect x="595" y="348" width="1" height="2" opacity="0.50"/><rect x="619" y="265" width="1" height="2" opacity="0.80"/><rect x="599" y="252" width="1" height="1" opacity="1.00"/><rect x="569" y="336" width="1" height="1" opacity="0.80"/><rect x="595" y="359" width="1" height="1" opacity="0.50"/><rect x="589" y="252" width="1" height="1" opacity="0.80"/><rect x="567" y="304" width="1" height="1" opacity="0.80"/><rect x="611" y="254" width="1" height="1" opacity="1.00"/><rect x="608" y="327" width="1" height="2" opacity="1.00"/><rect x="584" y="301" width="1" height="1" opacity="0.50"/><rect x="608" y="350" width="1" height="1" opacity="0.35"/><rect x="614" y="258" width="1" height="2" opacity="0.50"/><rect x="595" y="331" width="1" height="1" opacity="0.50"/><rect x="604" y="348" width="1" height="2" opacity="0.80"/><rect x="580" y="342" width="1" height="1" opacity="1.00"/><rect x="613" y="314" width="1" height="2" opacity="1.00"/><rect x="601" y="354" width="1" height="2" opacity="0.50"/><rect x="564" y="329" width="1" height="1" opacity="1.00"/><rect x="612" y="278" width="1" height="1" opacity="0.80"/><rect x="586" y="251" width="1" height="2" opacity="0.80"/><rect x="565" y="344" width="1" height="1" opacity="0.50"/><rect x="611" y="229" width="1" height="1" opacity="0.80"/><rect x="592" y="242" width="1" height="2" opacity="0.35"/><rect x="603" y="289" width="1" height="2" opacity="1.00"/><rect x="566" y="310" width="1" height="1" opacity="0.35"/><rect x="623" y="333" width="1" height="2" opacity="0.35"/><rect x="593" y="343" width="1" height="2" opacity="0.80"/><rect x="612" y="244" width="1" height="2" opacity="0.35"/><rect x="591" y="340" width="1" height="2" opacity="0.35"/><rect x="595" y="240" width="1" height="2" opacity="0.50"/><rect x="603" y="234" width="1" height="1" opacity="0.80"/><rect x="601" y="315" width="1" height="1" opacity="0.50"/><rect x="608" y="228" width="1" height="1" opacity="0.50"/><rect x="580" y="263" width="1" height="2" opacity="0.35"/><rect x="590" y="233" width="1" height="2" opacity="0.80"/><rect x="578" y="346" width="1" height="1" opacity="0.80"/><rect x="622" y="346" width="1" height="1" opacity="1.00"/><rect x="567" y="325" width="1" height="2" opacity="1.00"/><rect x="585" y="305" width="1" height="2" opacity="0.35"/><rect x="604" y="305" width="1" height="1" opacity="1.00"/><rect x="535" y="329" width="1" height="2" opacity="0.50"/><rect x="587" y="299" width="1" height="2" opacity="0.50"/><rect x="606" y="247" width="1" height="1" opacity="0.35"/><rect x="594" y="304" width="1" height="1" opacity="0.80"/><rect x="566" y="321" width="1" height="1" opacity="0.80"/><rect x="599" y="246" width="1" height="1" opacity="0.50"/><rect x="592" y="339" width="1" height="2" opacity="0.35"/><rect x="583" y="342" width="1" height="1" opacity="0.35"/><rect x="550" y="307" width="1" height="1" opacity="0.80"/><rect x="577" y="277" width="1" height="1" opacity="1.00"/><rect x="597" y="358" width="1" height="2" opacity="0.50"/><rect x="620" y="352" width="1" height="2" opacity="0.80"/><rect x="605" y="347" width="1" height="1" opacity="0.35"/><rect x="617" y="359" width="1" height="2" opacity="0.35"/><rect x="606" y="354" width="1" height="1" opacity="1.00"/><rect x="576" y="301" width="1" height="2" opacity="0.50"/><rect x="611" y="272" width="1" height="1" opacity="0.80"/><rect x="615" y="299" width="1" height="2" opacity="0.80"/><rect x="568" y="329" width="1" height="2" opacity="0.50"/><rect x="598" y="321" width="1" height="1" opacity="0.80"/><rect x="565" y="311" width="1" height="2" opacity="0.50"/><rect x="575" y="311" width="1" height="1" opacity="0.80"/><rect x="593" y="233" width="1" height="1" opacity="0.80"/><rect x="594" y="278" width="1" height="1" opacity="0.35"/><rect x="619" y="272" width="1" height="1" opacity="0.80"/><rect x="587" y="229" width="1" height="1" opacity="0.35"/><rect x="577" y="352" width="1" height="1" opacity="0.80"/><rect x="603" y="235" width="1" height="1" opacity="0.80"/><rect x="606" y="289" width="1" height="1" opacity="0.50"/><rect x="573" y="304" width="1" height="2" opacity="0.80"/><rect x="604" y="233" width="1" height="1" opacity="0.80"/><rect x="598" y="254" width="1" height="2" opacity="0.50"/><rect x="576" y="295" width="1" height="1" opacity="1.00"/><rect x="566" y="346" width="1" height="1" opacity="0.50"/><rect x="587" y="258" width="1" height="1" opacity="0.80"/><rect x="606" y="355" width="1" height="1" opacity="0.80"/><rect x="578" y="245" width="1" height="1" opacity="0.80"/><rect x="604" y="289" width="1" height="1" opacity="0.80"/><rect x="575" y="271" width="1" height="1" opacity="0.50"/><rect x="603" y="315" width="1" height="2" opacity="0.80"/><rect x="569" y="318" width="1" height="1" opacity="1.00"/><rect x="583" y="330" width="1" height="1" opacity="0.80"/><rect x="602" y="357" width="1" height="1" opacity="1.00"/><rect x="631" y="253" width="1" height="2" opacity="0.80"/><rect x="590" y="226" width="1" height="1" opacity="1.00"/><rect x="561" y="338" width="1" height="1" opacity="0.35"/><rect x="560" y="325" width="1" height="2" opacity="1.00"/><rect x="605" y="356" width="1" height="1" opacity="1.00"/><rect x="584" y="263" width="1" height="1" opacity="0.50"/><rect x="608" y="351" width="1" height="2" opacity="1.00"/><rect x="603" y="360" width="1" height="1" opacity="0.35"/><rect x="599" y="333" width="1" height="2" opacity="1.00"/><rect x="599" y="296" width="1" height="2" opacity="0.50"/><rect x="610" y="354" width="1" height="1" opacity="1.00"/><rect x="598" y="256" width="1" height="1" opacity="1.00"/><rect x="584" y="358" width="1" height="2" opacity="0.50"/><rect x="614" y="313" width="1" height="1" opacity="1.00"/><rect x="568" y="344" width="1" height="1" opacity="0.50"/><rect x="595" y="273" width="1" height="1" opacity="0.35"/><rect x="609" y="352" width="1" height="2" opacity="0.35"/><rect x="583" y="305" width="1" height="1" opacity="0.80"/><rect x="603" y="274" width="1" height="2" opacity="0.80"/><rect x="593" y="335" width="1" height="2" opacity="0.50"/><rect x="586" y="287" width="1" height="1" opacity="0.80"/><rect x="588" y="284" width="1" height="1" opacity="0.35"/><rect x="590" y="291" width="1" height="2" opacity="0.35"/><rect x="576" y="291" width="1" height="1" opacity="1.00"/><rect x="592" y="304" width="1" height="1" opacity="0.50"/><rect x="585" y="294" width="1" height="1" opacity="0.35"/><rect x="588" y="277" width="1" height="1" opacity="1.00"/><rect x="612" y="330" width="1" height="2" opacity="1.00"/><rect x="615" y="300" width="1" height="2" opacity="0.50"/><rect x="570" y="326" width="1" height="1" opacity="0.35"/><rect x="568" y="319" width="1" height="1" opacity="0.80"/><rect x="603" y="318" width="1" height="1" opacity="1.00"/><rect x="604" y="255" width="1" height="1" opacity="0.35"/><rect x="588" y="279" width="1" height="1" opacity="0.35"/><rect x="566" y="308" width="1" height="1" opacity="0.80"/><rect x="600" y="268" width="1" height="1" opacity="0.35"/><rect x="575" y="337" width="1" height="1" opacity="1.00"/><rect x="602" y="257" width="1" height="1" opacity="1.00"/><rect x="582" y="310" width="1" height="2" opacity="1.00"/><rect x="595" y="354" width="1" height="1" opacity="0.35"/><rect x="592" y="243" width="1" height="2" opacity="0.80"/><rect x="588" y="247" width="1" height="1" opacity="0.50"/><rect x="574" y="298" width="1" height="1" opacity="0.80"/><rect x="594" y="269" width="1" height="2" opacity="0.50"/><rect x="579" y="324" width="1" height="2" opacity="1.00"/><rect x="594" y="297" width="1" height="2" opacity="1.00"/><rect x="587" y="251" width="1" height="2" opacity="0.50"/><rect x="589" y="279" width="1" height="1" opacity="0.50"/><rect x="592" y="319" width="1" height="1" opacity="0.35"/><rect x="577" y="342" width="1" height="2" opacity="0.50"/><rect x="595" y="335" width="1" height="1" opacity="1.00"/><rect x="610" y="280" width="1" height="1" opacity="0.80"/><rect x="615" y="320" width="1" height="2" opacity="0.35"/><rect x="601" y="254" width="1" height="1" opacity="0.35"/><rect x="592" y="290" width="1" height="2" opacity="1.00"/><rect x="594" y="263" width="1" height="2" opacity="0.50"/><rect x="614" y="243" width="1" height="2" opacity="0.35"/><rect x="588" y="242" width="1" height="2" opacity="0.50"/><rect x="595" y="284" width="1" height="1" opacity="0.35"/><rect x="613" y="348" width="1" height="2" opacity="0.80"/><rect x="610" y="321" width="1" height="1" opacity="0.80"/><rect x="599" y="238" width="1" height="1" opacity="0.35"/><rect x="591" y="283" width="1" height="1" opacity="0.50"/><rect x="586" y="268" width="1" height="1" opacity="0.80"/><rect x="592" y="320" width="1" height="1" opacity="0.35"/><rect x="569" y="318" width="1" height="2" opacity="1.00"/><rect x="577" y="311" width="1" height="2" opacity="1.00"/><rect x="571" y="326" width="1" height="1" opacity="0.50"/><rect x="614" y="280" width="1" height="1" opacity="0.35"/><rect x="617" y="263" width="1" height="2" opacity="0.35"/><rect x="595" y="251" width="1" height="2" opacity="1.00"/></g>
</g>
<path d="M650 387 L768 366 L748 357 L709 357 L663 373 L655 372 Z" fill="#c8c8cc"/>
<path d="M650 387 L768 366 L768 372 L650 394 Z" fill="#5c5c62"/>
<path d="M672 383 L652 372 M694 379 L676 368 M716 375 L700 364 M738 371 L724 361 M758 367 L748 359" stroke="#8a8a90" stroke-width="1.2"/>
<path d="M646 300 Q648 352 663 374 L709 358 L714 296 L680 292 Z" fill="url(#boxg)"/>
<ellipse cx="672" cy="334" rx="14" ry="22" fill="url(#hl)"/>
<rect x="640" y="285" width="80" height="40" fill="url(#fadew)"/>
<path stroke="#fff" stroke-width="1.2" fill="none" d="M679 301L650 365M654 311L682 372M675 313L700 391M699 307L698 354M655 316L662 389M685 309L713 383M702 316L651 367M674 315L683 353M658 300L644 374M659 293L676 393M673 300L657 362M668 309L646 392M674 312L675 389M697 303L665 354M600 373L700 324M581 331L664 318M561 369L689 331M576 414L675 320M617 382L654 330M612 364L667 339M591 341L692 329M575 352L660 310M638 331L675 312M636 354L655 318M767 354L709 324M767 354L707 322M767 354L711 325M767 354L700 310M767 354L707 301M767 354L701 326"/>
<g fill="#f2f200">
<rect x="652" y="393" width="5" height="68"/>
<rect x="751" y="372" width="5" height="65"/>
<rect x="690.5" y="388" width="5" height="27"/>
<rect x="594.5" y="374" width="5" height="61"/>
</g>

<defs><linearGradient id="gblue" x1="0" y1="0" x2="0" y2="1"><stop offset="0" stop-color="#b0d8ff"/><stop offset="1" stop-color="#2a70e0"/></linearGradient></defs>
<path d="M321.2 43.5V82.5 M321.2 100.5V253 M341.2 100.5V243.3 M361 63V72.2H371" stroke="#9a9ab4" stroke-width="1.5" fill="none"/>
<path d="M341.2 110.0H351" stroke="#9a9ab4" stroke-width="1.5"/>
<path d="M341.2 129.0H351" stroke="#9a9ab4" stroke-width="1.5"/>
<path d="M341.2 148.0H351" stroke="#9a9ab4" stroke-width="1.5"/>
<path d="M341.2 167.0H351" stroke="#9a9ab4" stroke-width="1.5"/>
<path d="M341.2 186.0H351" stroke="#9a9ab4" stroke-width="1.5"/>
<path d="M341.2 205.0H351" stroke="#9a9ab4" stroke-width="1.5"/>
<path d="M341.2 224.0H351" stroke="#9a9ab4" stroke-width="1.5"/>
<path d="M341.2 243.0H351" stroke="#9a9ab4" stroke-width="1.5"/>
<path d="M294 11.9H309L301.5 21.1Z" fill="#fff"/>
<path d="M319 9.5 L323 8.5 L323 22.5 L319 22.5 Z" fill="#dcdce0"/><rect x="323" y="8.0" width="5" height="14.5" fill="url(#gblue)"/>
<path d="M314 30.9H329L321.5 40.1Z" fill="#fff"/>
<path d="M344.5 37.2 V28.5" stroke="#3a4cff" stroke-width="1.3"/><path d="M344.5 37.2 L334.5 39.7" stroke="#e04040" stroke-width="1.5"/><path d="M344.5 37.2 L348 41.0" stroke="#40c080" stroke-width="1.3"/>
<path d="M334 49.9H349L341.5 59.1Z" fill="#fff"/>
<ellipse cx="363" cy="59.0" rx="3.5" ry="1.3" fill="#2a1a10"/><path d="M356.5 48.0 Q361 46.5 366 48.5" fill="none" stroke="#e87a2a" stroke-width="2.2"/><path d="M361 48.5 L358.5 55.0 Q360 57.5 365.5 56.0 L366 53.0" fill="none" stroke="#e07020" stroke-width="2.2"/>
<path d="M375 66.0 L379 65.0 L388.5 76.0 L386 75.5 Z" fill="#c8b830"/><path d="M378 72.5 L381 71.5 L385 80.0 L383.5 79.5 Z" fill="#b8a828"/><circle cx="378" cy="71.0" r="3.2" fill="#30c030"/><circle cx="377.5" cy="69.8" r="1.4" fill="#b0ffa0"/>
<path d="M314 87.9H329L321.5 97.1Z" fill="#fff"/>
<circle cx="337.9" cy="89.8" r="3.3" fill="#30c030"/><circle cx="337.3" cy="88.8" r="1.4" fill="#a0ff90"/><path d="M344.3 94.0 V85.5" stroke="#3a4cff" stroke-width="1.3"/><path d="M344.3 94.0 L334 96.2" stroke="#e04040" stroke-width="1.5"/><path d="M344.3 94.0 L348.5 98.0" stroke="#40c080" stroke-width="1.3"/>
<path d="M355 107.5 L363 103.5 L369 105.5 L369 114.5 L361 117.5 L355 115.5 Z" fill="#3890e0"/><path d="M355 107.5 L363 103.5 L369 105.5 L361 109.5 Z" fill="#b8e0ff"/><path d="M361 109.5 L369 105.5 L369 114.5 L361 117.5 Z" fill="#2a70c8"/>
<path d="M355 126.5 L363 122.5 L369 124.5 L369 133.5 L361 136.5 L355 134.5 Z" fill="#3890e0"/><path d="M355 126.5 L363 122.5 L369 124.5 L361 128.5 Z" fill="#b8e0ff"/><path d="M361 128.5 L369 124.5 L369 133.5 L361 136.5 Z" fill="#2a70c8"/>
<circle cx="359.5" cy="151.5" r="5" fill="#d81818"/><circle cx="359.5" cy="151.5" r="3.2" fill="none" stroke="#f0d0d0" stroke-width="0.9"/><circle cx="359.5" cy="151.5" r="1.3" fill="#e88"/><path d="M361.5 149.5 L367.5 143.0" stroke="#70a020" stroke-width="1"/><circle cx="368" cy="142.5" r="1.5" fill="#90c020"/>
<circle cx="359.5" cy="170.5" r="5" fill="#d81818"/><circle cx="359.5" cy="170.5" r="3.2" fill="none" stroke="#f0d0d0" stroke-width="0.9"/><circle cx="359.5" cy="170.5" r="1.3" fill="#e88"/><path d="M361.5 168.5 L367.5 162.0" stroke="#70a020" stroke-width="1"/><circle cx="368" cy="161.5" r="1.5" fill="#90c020"/>
<circle cx="359.5" cy="189.5" r="5" fill="#d81818"/><circle cx="359.5" cy="189.5" r="3.2" fill="none" stroke="#f0d0d0" stroke-width="0.9"/><circle cx="359.5" cy="189.5" r="1.3" fill="#e88"/><path d="M361.5 187.5 L367.5 181.0" stroke="#70a020" stroke-width="1"/><circle cx="368" cy="180.5" r="1.5" fill="#90c020"/>
<circle cx="359.5" cy="208.5" r="5" fill="#d81818"/><circle cx="359.5" cy="208.5" r="3.2" fill="none" stroke="#f0d0d0" stroke-width="0.9"/><circle cx="359.5" cy="208.5" r="1.3" fill="#e88"/><path d="M361.5 206.5 L367.5 200.0" stroke="#70a020" stroke-width="1"/><circle cx="368" cy="199.5" r="1.5" fill="#90c020"/>
<circle cx="359.5" cy="227.5" r="5" fill="#d81818"/><circle cx="359.5" cy="227.5" r="3.2" fill="none" stroke="#f0d0d0" stroke-width="0.9"/><circle cx="359.5" cy="227.5" r="1.3" fill="#e88"/><path d="M361.5 225.5 L367.5 219.0" stroke="#70a020" stroke-width="1"/><circle cx="368" cy="218.5" r="1.5" fill="#90c020"/>
<circle cx="359.5" cy="246.5" r="5" fill="#d81818"/><circle cx="359.5" cy="246.5" r="3.2" fill="none" stroke="#f0d0d0" stroke-width="0.9"/><circle cx="359.5" cy="246.5" r="1.3" fill="#e88"/><path d="M361.5 244.5 L367.5 238.0" stroke="#70a020" stroke-width="1"/><circle cx="368" cy="237.5" r="1.5" fill="#90c020"/>
<path d="M318.4 255.2V270.2L327.4 262.7Z" fill="#fff"/>
<path d="M336 255.5 L344 255.5 L347 258.5 L347 269.5 L336 269.5 Z" fill="#e8e8e8"/><path d="M336 255.5 L344 255.5 L345.5 257.0 L336 257.0 Z" fill="#9070e0"/><rect x="340" y="259.5" width="5" height="8" fill="#c0c0c0"/>
<path d="M318.4 274.2V289.2L327.4 281.7Z" fill="#fff"/>
<path d="M336 274.5 L344 274.5 L347 277.5 L347 288.5 L336 288.5 Z" fill="#e8e8e8"/><path d="M336 274.5 L344 274.5 L345.5 276.0 L336 276.0 Z" fill="#9070e0"/><rect x="340" y="278.5" width="5" height="8" fill="#c0c0c0"/>
</svg>
<div class="tt" style="left:334.9px;top:11.5px;transform:scaleX(0.893)">Documentation Example Project</div>
<div class="tt" style="left:354.9px;top:30.5px;transform:scaleX(0.857)">ABB IRB 2600-12/1.85 Base</div>
<div class="tt" style="left:374.9px;top:49.5px;transform:scaleX(0.857)">ABB IRB 2600-12/1.85</div>
<div class="tt" style="left:394.9px;top:68.5px;transform:scaleX(0.875)">Weld gun</div>
<div class="tt" style="left:354.9px;top:87.5px;transform:scaleX(0.867)">Obstacle Reference</div>
<div class="tt" style="left:374.9px;top:106.5px;transform:scaleX(0.888)">Object Table</div>
<div class="tt" style="left:374.9px;top:125.5px;transform:scaleX(0.888)">box</div>
<div class="tt" style="left:374.9px;top:144.5px;transform:scaleX(0.903)">Start Target</div>
<div class="tt" style="left:374.9px;top:163.5px;transform:scaleX(0.865)">End Target</div>
<div class="tt" style="left:374.9px;top:182.5px;transform:scaleX(0.862)">Left Point 1</div>
<div class="tt" style="left:374.9px;top:201.5px;transform:scaleX(0.87)">Left Point 2</div>
<div class="tt" style="left:374.9px;top:220.5px;transform:scaleX(0.85)">Right Point 1</div>
<div class="tt" style="left:374.9px;top:239.5px;transform:scaleX(0.86)">Right Point 2</div>
<div class="tt" style="left:354.9px;top:258.5px;transform:scaleX(0.868)">Left Weld</div>
<div class="tt" style="left:354.9px;top:277.5px;transform:scaleX(0.848)">Right Weld</div>
<div id="vtop"></div>
</body></html>
